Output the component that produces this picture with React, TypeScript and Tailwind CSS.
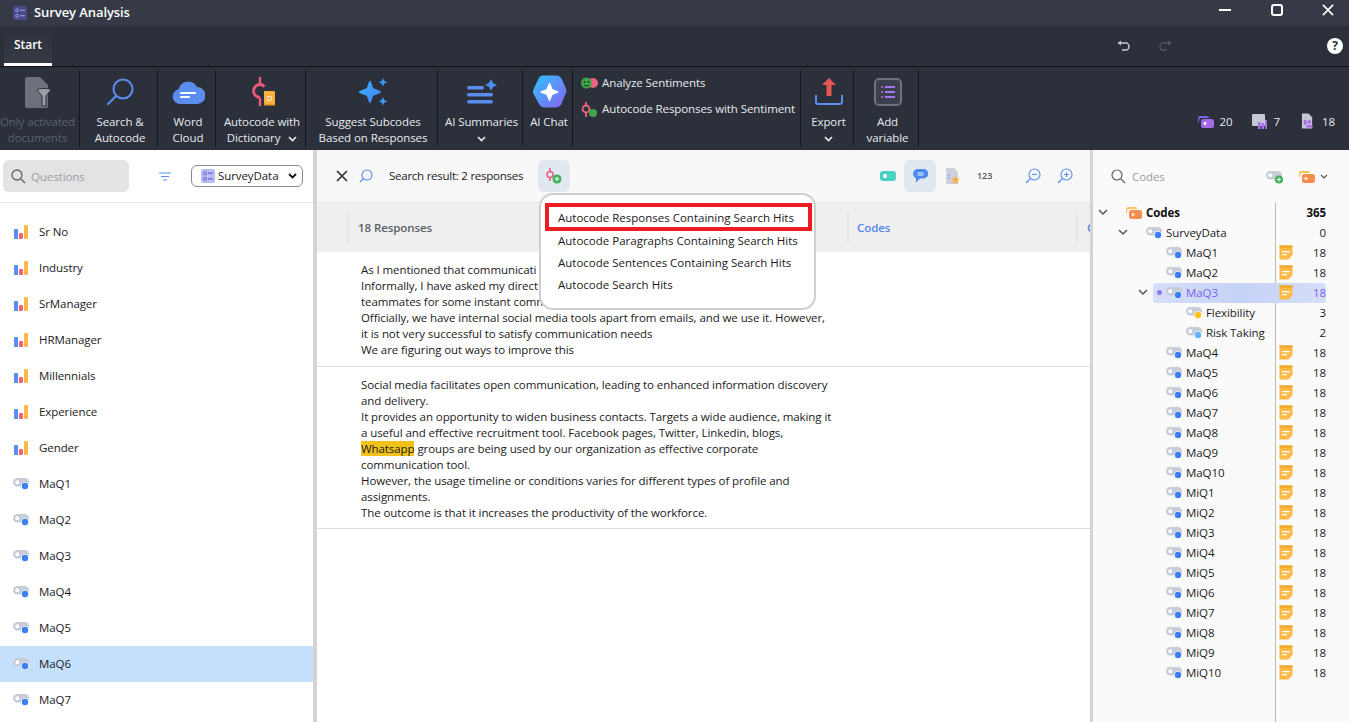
import React from "react";

const font = { fontFamily: '"Open Sans","Noto Sans",sans-serif', letterSpacing: "-0.08px" };

function BarsIcon() {
  return (
    <svg width="15" height="15" viewBox="0 0 15 15" className="shrink-0">
      <rect x="0" y="4" width="4" height="10" rx="0.7" fill="#5b8def" />
      <rect x="5" y="8" width="4" height="6" rx="0.7" fill="#f0637f" />
      <rect x="10" y="0" width="4" height="14" rx="0.7" fill="#fdb848" />
    </svg>
  );
}

function CodeIcon({ dot = "#3b7ff5", w = 17 }: { dot?: string; w?: number }) {
  return (
    <svg width={w} height="14" viewBox="0 0 17 14" className="shrink-0">
      <rect x="0" y="1" width="16" height="8.5" rx="4.2" fill="#c6ccd8" />
      <circle cx="4.3" cy="5.2" r="2" fill="#fff" />
      <circle cx="12" cy="9" r="3.8" fill="#fff" />
      <circle cx="12" cy="9" r="3.2" fill={dot} />
    </svg>
  );
}

function Memo() {
  return (
    <svg width="14" height="15" viewBox="0 0 14 15">
      <path d="M1.5 0.5h11a1 1 0 0 1 1 1V10l-4 4.5h-8a1 1 0 0 1-1-1v-12a1 1 0 0 1 1-1z" fill="#fdb944" />
      <rect x="0.5" y="0.5" width="13" height="2" fill="#eea526" />
      <rect x="3" y="6" width="8" height="1.3" fill="#fff" />
      <rect x="3" y="9" width="5" height="1.3" fill="#fff" />
    </svg>
  );
}

function CodesIcon({ w = 16 }: { w?: number }) {
  return (
    <svg width={w} height={w * 0.82} viewBox="0 0 16 13">
      <path d="M0 5V3a2 2 0 0 1 2-2h7a2 2 0 0 1 2 2H3a2 2 0 0 0-2 2v2H0z" fill="#fdc25b" />
      <rect x="3" y="4" width="13" height="9" rx="2.5" fill="#f98d4d" />
      <circle cx="7" cy="8.5" r="1.4" fill="#fff" />
    </svg>
  );
}

function SurveyGlyph({ size = 14 }: { size?: number }) {
  return (
    <svg width={size} height={size} viewBox="0 0 14 14" className="shrink-0">
      <rect width="14" height="14" rx="2" fill="#b9baf5" />
      <circle cx="4" cy="4.3" r="1.5" fill="none" stroke="#6a68dd" />
      <circle cx="4" cy="9.8" r="1.5" fill="none" stroke="#6a68dd" />
      <rect x="7" y="3.6" width="5" height="1.2" fill="#6a68dd" />
      <rect x="7" y="9.2" width="5" height="1.2" fill="#6a68dd" />
    </svg>
  );
}

function Sep() {
  return <div className="w-px self-stretch my-[4px] bg-[#14171d] shrink-0" />;
}

function Chevron({ color = "#e8eaee" }: { color?: string }) {
  return (
    <svg width="9" height="6" viewBox="0 0 9 6" className="inline-block">
      <path d="M1 1l3.5 3.5L8 1" fill="none" stroke={color} strokeWidth="1.6" />
    </svg>
  );
}

function RibbonBtn({
  w,
  icon,
  l1,
  l2,
  dim,
}: {
  w: number;
  icon: React.ReactNode;
  l1: string;
  l2: React.ReactNode;
  dim?: boolean;
}) {
  return (
    <div style={{ width: w }} className={`shrink-0 flex flex-col items-center ${dim ? "pr-[4px]" : "pl-[3px]"}`}>
      <div className="h-[38px] mt-[6px] flex items-center justify-center">{icon}</div>
      <div className={`mt-[3px] text-[11.5px] leading-[16px] text-center whitespace-nowrap ${dim ? "text-[#5c6270]" : "text-[#e8eaee]"}`}>
        <div className="h-[16px]">{l1}</div>
        <div className="h-[16px]">{l2}</div>
      </div>
    </div>
  );
}

const leftRows = ["Sr No", "Industry", "SrManager", "HRManager", "Millennials", "Experience", "Gender"];
const leftCodes = ["MaQ1", "MaQ2", "MaQ3", "MaQ4", "MaQ5", "MaQ6", "MaQ7"];

type Node = { name: string; indent: number; n: number; memo?: boolean; dot?: string; sel?: boolean; open?: boolean };
const tree: Node[] = [
  { name: "SurveyData", indent: 53, n: 0, open: true },
  ...["MaQ1", "MaQ2"].map((name) => ({ name, indent: 73, n: 18, memo: true })),
  { name: "MaQ3", indent: 73, n: 18, memo: true, sel: true, open: true },
  { name: "Flexibility", indent: 93, n: 3, dot: "#fcc419" },
  { name: "Risk Taking", indent: 93, n: 2, dot: "#66b3ff" },
  ...["MaQ4", "MaQ5", "MaQ6", "MaQ7", "MaQ8", "MaQ9", "MaQ10", "MiQ1", "MiQ2", "MiQ3", "MiQ4", "MiQ5", "MiQ6", "MiQ7", "MiQ8", "MiQ9", "MiQ10"].map(
    (name) => ({ name, indent: 73, n: 18, memo: true })
  ),
];

function TreeRow({ node }: { node: Node }) {
  return (
    <div className="relative h-[20px] flex items-center text-[11.5px] text-[#1a1a1a]">
      {node.sel && <div className="absolute left-[60px] right-[23px] top-0 bottom-0 rounded-[3px] bg-gradient-to-r from-[#d6def9] via-[#c6d2f6] to-[#d6def9]" />}
      {node.open && (
        <div className="absolute" style={{ left: node.indent - 28, top: 6 }}>
          <svg width="10" height="7" viewBox="0 0 10 7" className="block">
            <path d="M1 1l4 4 4-4" fill="none" stroke="#555" strokeWidth="1.5" />
          </svg>
        </div>
      )}
      {node.sel && <div className="absolute left-[64px] top-[7px] w-[5px] h-[5px] rounded-full bg-[#8d7bf0]" />}
      <div className="relative flex items-center gap-[3px]" style={{ paddingLeft: node.indent }}>
        <CodeIcon dot={node.dot} />
        <span className={node.sel ? "text-[#7a62ee]" : ""}>{node.name}</span>
      </div>
      {node.memo && (
        <div className="absolute left-[186px] top-[2px]">
          <Memo />
        </div>
      )}
      <div className={`absolute right-[23px] ${node.sel ? "text-[#7a62ee]" : ""}`}>{node.n}</div>
    </div>
  );
}

export default function App() {
  return (
    <div style={font} className="w-[1349px] h-[722px] overflow-hidden flex flex-col bg-white">
      {/* title bar */}
      <div className="h-[26px] shrink-0 bg-[#353a46] flex items-center pl-[13px]">
        <SurveyGlyphDark />
        <span className="ml-[7px] text-[13px] font-semibold text-white">Survey Analysis</span>
        <div className="ml-auto flex items-center pb-[6px]">
          <div className="w-[12px] h-[2px] bg-white mr-[40px]" />
          <div className="w-[12px] h-[12px] border-2 border-white rounded-[3px] mr-[39px]" />
          <svg width="12" height="12" viewBox="0 0 13 13" className="mr-[15px]">
            <path d="M1 1l11 11M12 1L1 12" stroke="#fff" strokeWidth="1.7" />
          </svg>
        </div>
      </div>
      {/* tab row */}
      <div className="h-[41px] shrink-0 bg-[#2b303b] border-b border-[#0f1114] flex items-center relative">
        <div className="ml-[4px] w-[48px] h-[40px] flex items-center justify-center bg-gradient-to-b from-[#2b303b] to-[#363a45] border-b-[3px] border-white text-[12px] font-semibold text-white">
          Start
        </div>
        <div className="ml-auto flex items-center">
          <svg width="16" height="12" viewBox="0 0 16 12" className="mr-[23px]">
            <path d="M1 3h9a4 4 0 0 1 0 7H5" fill="none" stroke="#c9ccd3" strokeWidth="1.4" />
            <path d="M4 0.5L1 3l3 2.5z" fill="#c9ccd3" />
          </svg>
          <svg width="16" height="12" viewBox="0 0 16 12" className="mr-[155px]">
            <path d="M15 3H6a4 4 0 0 0 0 7h5" fill="none" stroke="#525763" strokeWidth="1.4" />
            <path d="M12 0.5L15 3l-3 2.5z" fill="#525763" />
          </svg>
          <div className="mr-[6px] w-[16px] h-[16px] rounded-full bg-white text-[#2b303b] text-[12px] font-bold flex items-center justify-center">?</div>
        </div>
      </div>
      {/* ribbon */}
      <div className="h-[83px] shrink-0 bg-[#2b303b] flex items-stretch relative">
        <RibbonBtn
          w={79}
          dim
          l1="Only activated"
          l2="documents"
          icon={
            <svg width="27" height="33" viewBox="0 0 27 33">
              <path d="M3 1h13l8 8v21a2 2 0 0 1-2 2H3a2 2 0 0 1-2-2V3a2 2 0 0 1 2-2z" fill="#6c717c" />
              <path d="M13 14c0-2 14-2 14 0l-5 6v10h-4V20z" fill="#9a9ea7" stroke="#2b303b" strokeWidth="1" />
            </svg>
          }
        />
        <Sep />
        <RibbonBtn
          w={77}
          l1="Search &"
          l2="Autocode"
          icon={
            <svg width="28" height="28" viewBox="0 0 28 28">
              <circle cx="17" cy="11" r="9.5" fill="none" stroke="#5b8def" strokeWidth="2" />
              <path d="M10 18L2 26" stroke="#5b8def" strokeWidth="2.2" strokeLinecap="round" />
            </svg>
          }
        />
        <Sep />
        <RibbonBtn
          w={57}
          l1="Word"
          l2="Cloud"
          icon={
            <svg width="33" height="24" viewBox="0 0 33 24">
              <path d="M8 24a7.5 7.5 0 0 1-1.5-14.8A10 10 0 0 1 25 7a8.5 8.5 0 0 1 0 17z" fill="#5b8def" />
              <rect x="8" y="12" width="16" height="2" rx="1" fill="#fff" />
              <rect x="8" y="16" width="10" height="2" rx="1" fill="#fff" />
            </svg>
          }
        />
        <Sep />
        <RibbonBtn
          w={89}
          l1="Autocode with"
          l2={
            <span>
              Dictionary <span className="ml-[5px] inline-block"><Chevron /></span>
            </span>
          }
          icon={<AutocodeGlyph />}
        />
        <Sep />
        <RibbonBtn
          w={131}
          l1="Suggest Subcodes"
          l2="Based on Responses"
          icon={
            <svg width="30" height="30" viewBox="0 0 30 30">
              <defs>
                <linearGradient id="sp" x1="0" y1="0" x2="1" y2="1">
                  <stop offset="0" stopColor="#2fb5ff" />
                  <stop offset="1" stopColor="#4c7cf5" />
                </linearGradient>
              </defs>
              <path d="M12 5l2.5 7 7.5 3-7.5 3-2.5 7-2.5-7L2 15l7.5-3z" fill="url(#sp)" strokeLinejoin="round" stroke="url(#sp)" strokeWidth="2" />
              <path d="M25 1l1.3 3 3 1.3-3 1.3-1.3 3-1.3-3-3-1.3 3-1.3z" fill="#3b9bf7" />
              <path d="M25 20l1.3 3 3 1.3-3 1.3-1.3 3-1.3-3-3-1.3 3-1.3z" fill="#3b9bf7" />
            </svg>
          }
        />
        <Sep />
        <RibbonBtn
          w={84}
          l1="AI Summaries"
          l2={<Chevron />}
          icon={
            <svg width="32" height="28" viewBox="0 0 32 28">
              <rect x="1" y="8" width="17" height="3.5" rx="1.7" fill="#5b8def" />
              <rect x="1" y="15" width="26" height="3.5" rx="1.7" fill="#5b8def" />
              <rect x="1" y="22" width="26" height="3.5" rx="1.7" fill="#5b8def" />
              <path d="M25 1l2 4 4 2-4 2-2 4-2-4-4-2 4-2z" fill="#4d8df2" />
            </svg>
          }
        />
        <Sep />
        <RibbonBtn
          w={49}
          l1="AI Chat"
          l2=""
          icon={
            <svg width="35" height="36" viewBox="0 0 34 34">
              <defs>
                <linearGradient id="ch" x1="0" y1="0" x2="1" y2="1">
                  <stop offset="0" stopColor="#2fc3ff" />
                  <stop offset="1" stopColor="#8a62f0" />
                </linearGradient>
              </defs>
              <path d="M11 1h13a5 5 0 0 1 4.5 2.7l4.5 10a5 5 0 0 1 0 4l-4.5 11a6 6 0 0 1-5 3.3H12a6 6 0 0 1-5-3L1.5 19a6 6 0 0 1 0-5L6.5 4A5 5 0 0 1 11 1z" fill="url(#ch)" />
              <path d="M17 9l2.3 5.7L25 17l-5.7 2.3L17 25l-2.3-5.7L9 17l5.7-2.3z" fill="#fff" stroke="#fff" strokeWidth="1.5" strokeLinejoin="round" />
            </svg>
          }
        />
        <Sep />
        <div className="w-[227px] shrink-0 flex flex-col pl-[8px] pt-[7px] text-[11.5px] text-[#e8eaee]">
          <div className="h-[18px] flex items-center gap-[4px]">
            <svg width="17" height="12" viewBox="0 0 17 12">
              <circle cx="12" cy="6" r="5" fill="#f0637f" />
              <circle cx="5.5" cy="6" r="5.5" fill="#43a34c" />
              <circle cx="3.5" cy="5" r="0.9" fill="#14361a" />
              <circle cx="7.5" cy="5" r="0.9" fill="#14361a" />
              <path d="M3 8c1.5 1.3 3.5 1.3 5 0" stroke="#14361a" fill="none" />
            </svg>
            <span>Analyze Sentiments</span>
          </div>
          <div className="h-[18px] mt-[8px] flex items-center gap-[4px]">
            <svg width="17" height="15" viewBox="0 0 17 15">
              <path d="M5 0v3M5 11v4" stroke="#f0637f" strokeWidth="1.8" />
              <circle cx="5" cy="7" r="3.5" fill="none" stroke="#f0637f" strokeWidth="1.8" />
              <circle cx="12" cy="11" r="4" fill="#43a34c" />
            </svg>
            <span>Autocode Responses with Sentiment</span>
          </div>
        </div>
        <Sep />
        <RibbonBtn
          w={52}
          l1="Export"
          l2={<Chevron />}
          icon={
            <svg width="30" height="30" viewBox="0 0 30 30">
              <path d="M15 1l7 7h-4.500v11h-5V8H8z" fill="#e25a52" />
              <path d="M2 18v7a2 2 0 0 0 2 2h22a2 2 0 0 0 2-2v-7" fill="none" stroke="#5b8def" strokeWidth="2" />
            </svg>
          }
        />
        <Sep />
        <RibbonBtn
          w={64}
          l1="Add"
          l2="variable"
          icon={
            <svg width="28" height="28" viewBox="0 0 28 28">
              <rect x="1" y="1" width="26" height="26" rx="4" fill="#3a3f4b" stroke="#6c717c" strokeWidth="2" />
              <circle cx="8" cy="9" r="1" fill="#a774f0" />
              <circle cx="8" cy="14" r="1" fill="#a774f0" />
              <circle cx="8" cy="19" r="1" fill="#a774f0" />
              <rect x="11" y="8" width="10" height="2" fill="#a774f0" />
              <rect x="11" y="13" width="10" height="2" fill="#a774f0" />
              <rect x="11" y="18" width="10" height="2" fill="#a774f0" />
            </svg>
          }
        />
        <Sep />
        <div className="ml-auto mr-[14px] mb-[20px] self-end flex items-center text-[11.5px] text-[#e8eaee]">
          <svg width="16" height="13" viewBox="0 0 16 13" className="mr-[6px]">
            <path d="M0 5V3a2 2 0 0 1 2-2h7a2 2 0 0 1 2 2H3a2 2 0 0 0-2 2v2H0z" fill="#7a66e8" />
            <rect x="3" y="4" width="13" height="9" rx="2.5" fill="#a66be8" />
            <circle cx="7" cy="8.5" r="1.4" fill="#fff" />
          </svg>
          <span>20</span>
          <svg width="15" height="15" viewBox="0 0 15 15" className="ml-[19px] mr-[7px]">
            <rect x="0" y="0" width="13" height="12" rx="1" fill="#c4c8d4" />
            <rect x="6" y="8" width="2.5" height="7" fill="#a96be8" />
            <rect x="9.5" y="9" width="2.5" height="6" fill="#a96be8" />
            <rect x="13" y="6" width="2" height="9" fill="#a96be8" />
          </svg>
          <span>7</span>
          <svg width="13" height="16" viewBox="0 0 14 16" className="ml-[21px] mr-[8px]">
            <path d="M1 0h7l4 4v12H1z" fill="#c4c8d4" />
            <circle cx="9" cy="9" r="2" fill="#a96be8" />
            <path d="M5 15c0-4 8-4 8 0z" fill="#a96be8" />
            <rect x="3" y="7" width="3" height="5" fill="#a96be8" />
          </svg>
          <span>18</span>
        </div>
      </div>

      {/* body */}
      <div className="flex-1 flex min-h-0">
        {/* left */}
        <div className="w-[313px] shrink-0 flex flex-col overflow-hidden">
          <div className="h-[53px] shrink-0 border-b border-[#e8e8e8] flex items-center pl-[3px]">
            <div className="w-[126px] h-[32px] rounded-[6px] bg-[#e3e3e3] flex items-center pl-[8px] gap-[5px] text-[11.5px] text-[#9a9ea6]">
              <svg width="15" height="15" viewBox="0 0 15 15">
                <circle cx="6" cy="6" r="5" fill="none" stroke="#5f6368" strokeWidth="1.3" />
                <path d="M10 10l4 4" stroke="#5f6368" strokeWidth="1.4" />
              </svg>
              <span className="pt-[1px]">Questions</span>
            </div>
            <svg width="12" height="9" viewBox="0 0 12 9" className="ml-[30px]">
              <path d="M0 1h12M2 4.5h8M4 8h4" stroke="#5b8def" strokeWidth="1.2" />
            </svg>
            <div className="ml-[20px] w-[112px] h-[22px] rounded-[6px] border border-[#8a8a8a] flex items-center pl-[9px] gap-[3px] text-[11.5px] text-[#1a1a1a]">
              <SurveyGlyph />
              <span>SurveyData</span>
              <svg width="9" height="6" viewBox="0 0 9 6" className="ml-auto mr-[5px]">
                <path d="M1 1l3.5 3.5L8 1" fill="none" stroke="#111" strokeWidth="1.8" />
              </svg>
            </div>
          </div>
          <div className="pt-[11px]">
            {leftRows.map((r) => (
              <div key={r} className="h-[36px] flex items-center pl-[14px] gap-[10px] text-[11.5px] text-[#1a1a1a]">
                <BarsIcon />
                <span>{r}</span>
              </div>
            ))}
            {leftCodes.map((r) => (
              <div key={r} className={`h-[36px] flex items-center pl-[13px] gap-[9px] text-[11.5px] text-[#1a1a1a] ${r === "MaQ6" ? "bg-[#c5e0fd]" : ""}`}>
                <CodeIcon />
                <span>{r}</span>
              </div>
            ))}
          </div>
        </div>
        <div className="w-[4px] shrink-0 bg-[#d4d4d4]" />

        {/* center */}
        <div className="w-[773px] shrink-0 flex flex-col relative overflow-hidden">
          <div className="h-[53px] shrink-0 bg-[#f8f8f8] border-b border-[#e4e4e4] flex items-center text-[11.5px] text-[#1a1a1a]">
            <svg width="12" height="12" viewBox="0 0 12 12" className="ml-[19px]">
              <path d="M1 1l10 10M11 1L1 11" stroke="#333" strokeWidth="1.7" />
            </svg>
            <svg width="14" height="14" viewBox="0 0 14 14" className="ml-[11px]">
              <circle cx="8" cy="6" r="5" fill="none" stroke="#5b8def" strokeWidth="1.1" />
              <path d="M4.5 9.5L1 13" stroke="#5b8def" strokeWidth="1.2" />
            </svg>
            <span className="ml-[16px] w-[134px] whitespace-nowrap tracking-[-0.25px]">Search result: 2 responses</span>
            <div className="ml-[15px] w-[32px] h-[32px] rounded-[6px] bg-[#e2e8f0] flex items-center justify-center">
              <svg width="16" height="16" viewBox="0 0 16 16">
                <path d="M4 0v3M4 10v3" stroke="#ed5a7c" strokeWidth="1.5" />
                <circle cx="4" cy="6.5" r="3" fill="none" stroke="#ed5a7c" strokeWidth="1.5" />
                <circle cx="11" cy="11" r="4.5" fill="#3fb15a" />
                <path d="M8.8 11h4.4M11 8.8v4.4" stroke="#fff" strokeWidth="1.1" />
              </svg>
            </div>
            <div className="ml-auto flex items-center mr-[17px]">
              <svg width="16" height="10" viewBox="0 0 16 10">
                <rect width="16" height="10" rx="3" fill="#4fd0c6" />
                <circle cx="5" cy="5" r="2" fill="#fff" />
              </svg>
              <div className="ml-[8px] w-[32px] h-[32px] rounded-[6px] bg-[#e2e8f0] flex items-center justify-center">
                <svg width="15" height="14" viewBox="0 0 15 14">
                  <path d="M4.5 0h6a4.5 4.5 0 0 1 0 9.5H7L3 13.5V9.2A4.8 4.8 0 0 1 4.5 0z" fill="#4f8bec" />
                  <path d="M4.5 4h6M4.5 6h6" stroke="#fff" strokeWidth="0.9" />
                </svg>
              </div>
              <svg width="14" height="16" viewBox="0 0 14 16" className="ml-[10px]">
                <path d="M0 0h8l4 4v12H0z" fill="#ccd1dd" />
                <circle cx="3" cy="7" r="0.8" fill="#a774f0" />
                <circle cx="3" cy="10" r="0.8" fill="#a774f0" />
                <path d="M9.5 8l1.3 2.5 2.7.4-2 2 .5 2.8-2.5-1.3-2.5 1.3.5-2.8-2-2 2.7-.4z" fill="#fbb13c" />
              </svg>
              <span className="ml-[17px] w-[16px] text-[9px] font-semibold text-[#555]">123</span>
              <svg width="16" height="16" viewBox="0 0 16 16" className="ml-[32px]">
                <circle cx="9.5" cy="6.5" r="5.5" fill="none" stroke="#5b8def" strokeWidth="1.1" />
                <path d="M5.5 10.5L1 15" stroke="#5b8def" strokeWidth="1.3" />
                <path d="M7 6.5h5" stroke="#5b8def" strokeWidth="1.1" />
              </svg>
              <svg width="16" height="16" viewBox="0 0 16 16" className="ml-[16px]">
                <circle cx="9.5" cy="6.5" r="5.5" fill="none" stroke="#5b8def" strokeWidth="1.1" />
                <path d="M5.5 10.5L1 15" stroke="#5b8def" strokeWidth="1.3" />
                <path d="M7 6.5h5M9.5 4v5" stroke="#5b8def" strokeWidth="1.1" />
              </svg>
            </div>
          </div>
          <div className="h-[49px] shrink-0 bg-[#efefef] flex items-center text-[11.5px] font-semibold">
            <div className="ml-[30px] w-[500px] shrink-0 h-[33px] border-l-2 border-[#e8e8e8] flex items-center pl-[9px] pt-[1px] text-[#5a5f69]">18 Responses</div>
            <div className="h-[33px] w-[231px] shrink-0 border-x-2 border-[#e8e8e8] flex items-center pl-[8px] pt-[1px] text-[#4f86ea]">Codes</div>
            <span className="ml-[9px] pt-[1px] shrink-0 text-[#4f86ea]">C</span>
          </div>
          <div className="border-b border-[#dcdcdc] h-[115px] pl-[44px] pt-[10px] text-[11.5px] leading-[16px] text-[#1a1a1a] whitespace-nowrap">
            <div>As I mentioned that communicati</div>
            <div>Informally, I have asked my direct</div>
            <div>teammates for some instant comm</div>
            <div>Officially, we have internal social media tools apart from emails, and we use it. However,</div>
            <div>it is not very successful to satisfy communication needs</div>
            <div>We are figuring out ways to improve this</div>
          </div>
          <div className="border-b border-[#dcdcdc] h-[162px] pl-[44px] pt-[10px] text-[11.5px] leading-[16px] text-[#1a1a1a] whitespace-nowrap">
            <div>Social media facilitates open communication, leading to enhanced information discovery</div>
            <div>and delivery.</div>
            <div>It provides an opportunity to widen business contacts. Targets a wide audience, making it</div>
            <div>a useful and effective recruitment tool. Facebook pages, Twitter, Linkedin, blogs,</div>
            <div>
              <span className="bg-[#f1c21b]">Whatsapp</span> groups are being used by our organization as effective corporate
            </div>
            <div>communication tool.</div>
            <div>However, the usage timeline or conditions varies for different types of profile and</div>
            <div>assignments.</div>
            <div>The outcome is that it increases the productivity of the workforce.</div>
          </div>

          {/* popover */}
          <div className="absolute left-[222px] top-[43px] w-[277px] h-[117px] rounded-[14px] border-2 border-[#cfcfcf] bg-white pl-[4px] pt-[8px] text-[11.5px] tracking-[0px] text-[#1a1a1a]">
            <div className="w-[267px] h-[28px] border-[4px] border-[#ec1c24] flex items-center pl-[9px] pt-[1px] whitespace-nowrap">Autocode Responses Containing Search Hits</div>
            <div className="h-[22px] -mt-[1px] flex items-center pl-[13px] whitespace-nowrap">Autocode Paragraphs Containing Search Hits</div>
            <div className="h-[22px] flex items-center pl-[13px] whitespace-nowrap">Autocode Sentences Containing Search Hits</div>
            <div className="h-[22px] flex items-center pl-[13px] whitespace-nowrap">Autocode Search Hits</div>
          </div>
        </div>
        <div className="w-[3px] shrink-0 bg-[#d4d4d4]" />

        {/* right */}
        <div className="flex-1 flex flex-col bg-[#fafafa] relative overflow-hidden">
          <div className="h-[53px] shrink-0 flex items-center pl-[18px] text-[11.5px] text-[#9a9ea6]">
            <svg width="15" height="15" viewBox="0 0 15 15">
              <circle cx="6" cy="6" r="5" fill="none" stroke="#5f6368" strokeWidth="1.2" />
              <path d="M10 10l4 4" stroke="#5f6368" strokeWidth="1.3" />
            </svg>
            <span className="ml-[6px] pt-[1px]">Codes</span>
            <div className="ml-auto flex items-center mr-[21px]">
              <svg width="18" height="14" viewBox="0 0 18 14" className="mr-[15px]">
                <rect x="0" y="1" width="16" height="8.5" rx="4.2" fill="#c6ccd8" />
                <circle cx="4.3" cy="5.2" r="2" fill="#fff" />
                <circle cx="13" cy="9.5" r="4" fill="#3fb15a" />
                <path d="M11 9.5h4M13 7.5v4" stroke="#fff" />
              </svg>
              <CodesIcon />
              <svg width="8" height="5" viewBox="0 0 8 5" className="ml-[5px]">
                <path d="M1 1l3 3 3-3" fill="none" stroke="#555" strokeWidth="1.2" />
              </svg>
            </div>
          </div>
          <div className="absolute left-[182px] top-[53px] bottom-0 w-px bg-[#b8b8b8]" />
          <div>
            <div className="relative h-[20px] flex items-center text-[11.5px] font-bold text-[#111]">
              <svg width="10" height="7" viewBox="0 0 10 7" className="absolute left-[5px] top-[6px]">
                <path d="M1 1l4 4 4-4" fill="none" stroke="#555" strokeWidth="1.5" />
              </svg>
              <div className="pl-[33px] flex items-center gap-[4px]">
                <CodesIcon />
                Codes
              </div>
              <div className="absolute right-[23px]">365</div>
            </div>
            {tree.map((n) => (
              <TreeRow key={n.name} node={n} />
            ))}
          </div>
        </div>
      </div>
    </div>
  );
}

function SurveyGlyphDark() {
  return (
    <svg width="14" height="14" viewBox="0 0 14 14" className="shrink-0">
      <rect width="14" height="14" rx="2" fill="#4a4a85" />
      <circle cx="4" cy="4.3" r="1.4" fill="none" stroke="#9a9af0" />
      <circle cx="4" cy="9.8" r="1.4" fill="none" stroke="#9a9af0" />
      <rect x="7" y="3.7" width="5" height="1.1" fill="#9a9af0" />
      <rect x="7" y="9.2" width="5" height="1.1" fill="#9a9af0" />
    </svg>
  );
}

function AutocodeGlyph() {
  return (
    <svg width="24" height="30" viewBox="0 0 24 30" className="ml-[2px]">
      <path d="M9 0v7M9 21v8" stroke="#ee5a79" strokeWidth="2.4" />
      <path d="M9 7.5a6.5 6.5 0 0 0 0 13" fill="none" stroke="#ee5a79" strokeWidth="2.8" />
      <path d="M9 7.5a6.5 6.5 0 0 1 4.5 2" fill="none" stroke="#ee5a79" strokeWidth="2.8" />
      <rect x="13" y="14" width="11" height="13" rx="1" fill="#fbb13c" />
      <rect x="13" y="27" width="11" height="1.5" fill="#e99a22" />
      <text x="15.5" y="24" fontSize="8" fill="#fff" fontFamily="Open Sans">D</text>
    </svg>
  );
}
